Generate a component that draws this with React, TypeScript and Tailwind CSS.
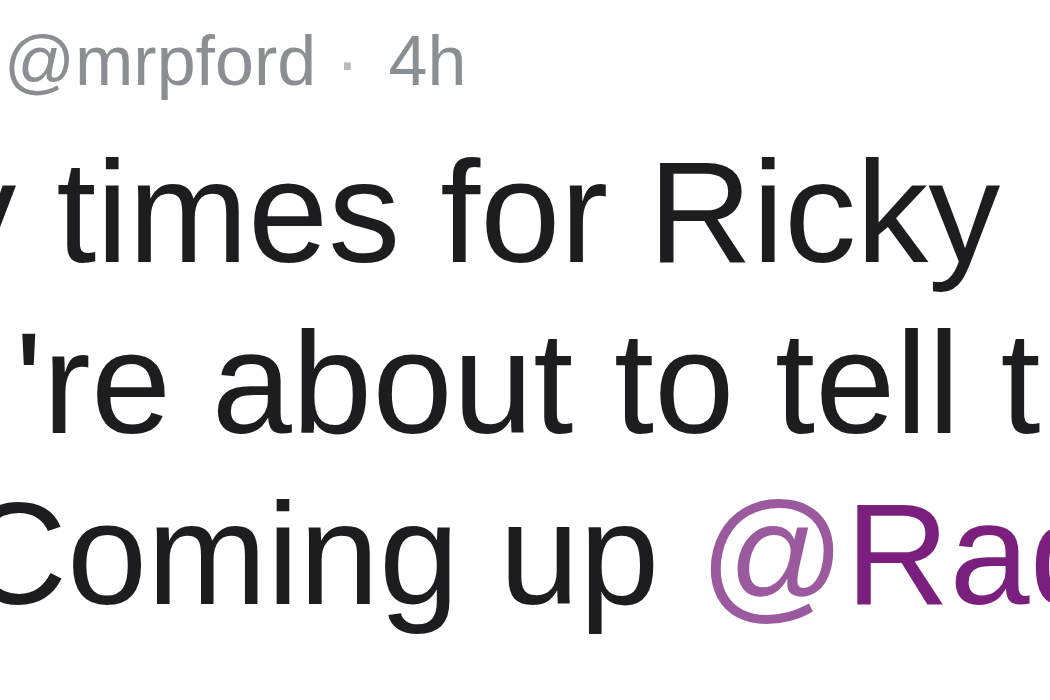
export default function App() {
  return (
    <div className="w-[1050px] h-[700px] overflow-hidden bg-white font-['Liberation_Sans',Arial,sans-serif]">
      <div className="mt-[26px] pl-[4px] whitespace-nowrap text-[70px] leading-none text-[#8b8f93]">
        @mrpford <span className="text-[#b9bcbf]">·</span>{' '}
        <span className="ml-[10px] text-[#8a8f93]">4h</span>
      </div>
      <div className="mt-[31px] whitespace-nowrap text-[144px] leading-[171px] text-[#1d1d1f]">
        <div className="-ml-[336px]">Many times for Ricky</div>
        <div className="ml-[15px] tracking-[0.3px]">'re about to tell t</div>
        <div className="-ml-[37px]">
          Coming up <span className="text-[#9b5a9e]">@</span>
          <span className="text-[#7b1f7f]">RadioX</span>
        </div>
      </div>
    </div>
  );
}
